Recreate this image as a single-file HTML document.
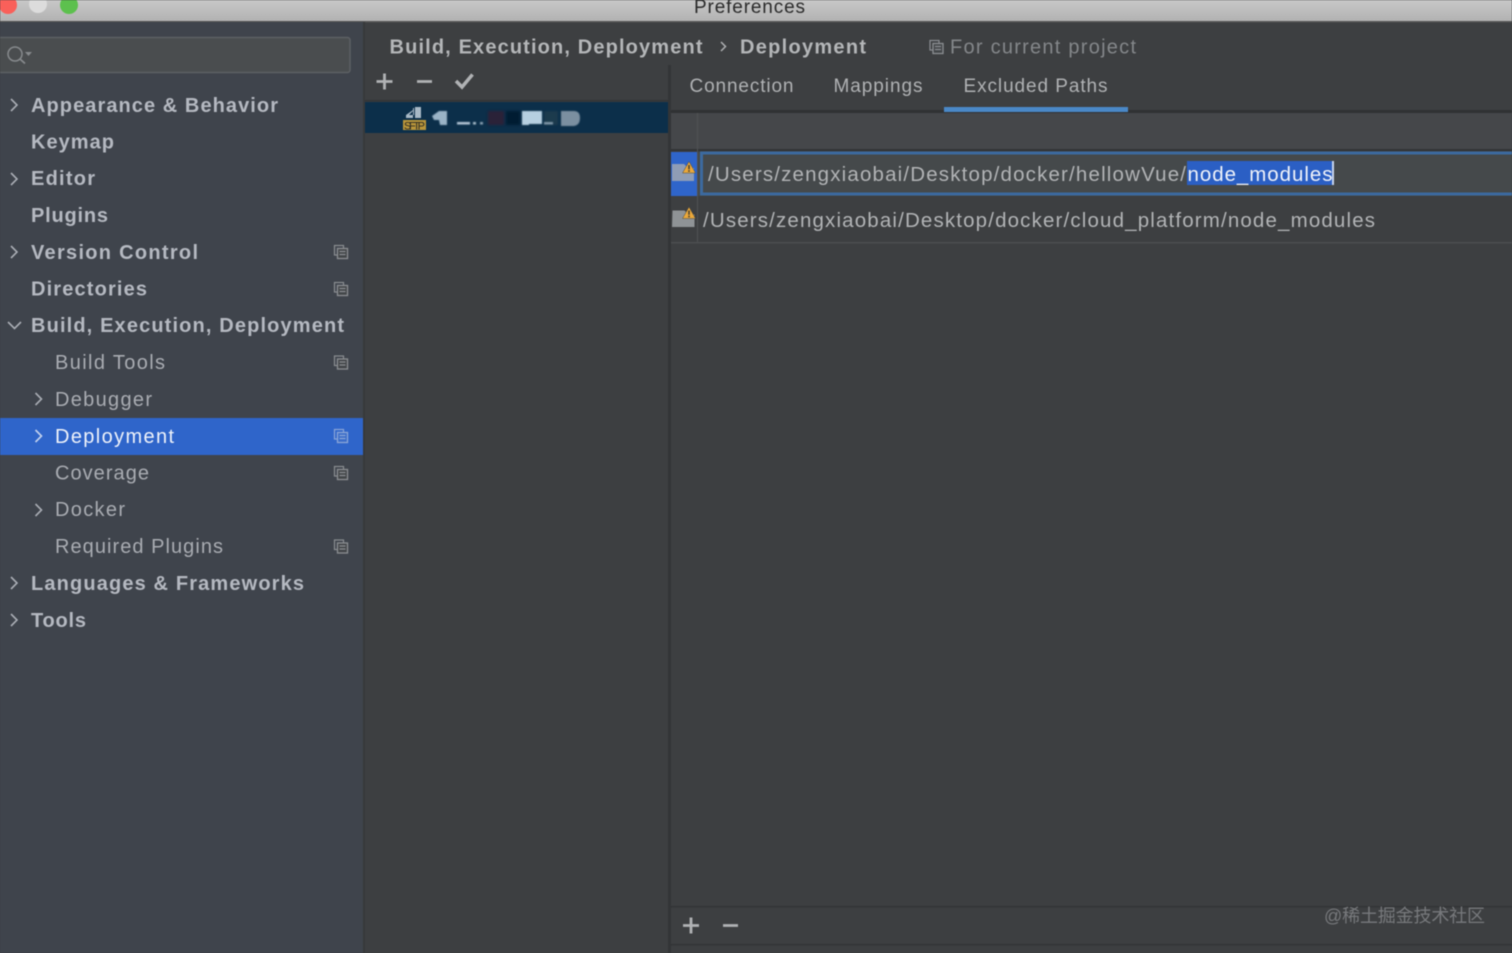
<!DOCTYPE html>
<html><head><meta charset="utf-8"><style>
html,body{margin:0;padding:0;background:#3d3f41;width:1512px;height:953px;overflow:hidden}
svg{display:block;filter:blur(.45px)}
text{font-family:"Liberation Sans","Noto Sans CJK SC",sans-serif;font-size:20px;fill:#b3b6bb}
.b{font-weight:700;fill:#b5b9c1}
.r{fill:#a9acb2}
.m{font-size:19px;fill:#b0b2b4}
.p{font-size:20.500px;fill:#b2b4b6}
.ch{fill:none;stroke:#a9adb4;stroke-width:1.600}
</style></head><body>
<svg width="1512" height="953" viewBox="0 0 1512 953" xmlns="http://www.w3.org/2000/svg">
<defs>
<linearGradient id="t" x1="0" x2="0" y1="0" y2="1"><stop offset="0" stop-color="#c8c8c8"/><stop offset="1" stop-color="#b2b2b2"/></linearGradient>
<filter id="bl" x="-30%" y="-30%" width="160%" height="160%"><feGaussianBlur stdDeviation="1"/></filter>
<g id="cp"><rect x="-6.500" y="-6.500" width="9" height="9.500" fill="none" stroke="#8b8e92" stroke-width="1.200"/><rect x="-3.500" y="-3.500" width="10" height="10" fill="#434649" stroke="#8b8e92" stroke-width="1.300"/><path d="M-1.500-.5h6M-1.500 2.500h6" stroke="#8b8e92" stroke-width="1.200"/></g>
<g id="warn"><path d="M6 0l6.500 11.500h-13z" fill="#eba83a" stroke="#4a4a40" stroke-width=".5"/><rect x="5.200" y="3.500" width="1.600" height="4.300" fill="#4a4130"/><rect x="5.200" y="8.700" width="1.600" height="1.600" fill="#4a4130"/></g>
</defs>
<rect width="1512" height="953" fill="#3d3f41"/>
<!-- title bar -->
<rect width="1512" height="21" fill="url(#t)"/>
<rect y="21" width="1512" height="1.500" fill="#555"/>
<circle cx="8" cy="5" r="9" fill="#f9605a"/><circle cx="38" cy="4" r="9" fill="#dcdcdc"/><circle cx="69" cy="5" r="9" fill="#5dc04e"/>
<text x="694" y="13" textLength="111" style="fill:#2a2a2a;font-size:19px">Preferences</text>
<!-- sidebar -->
<rect y="22" width="363" height="931" fill="#3f444c"/>
<rect x="363" y="22" width="2" height="931" fill="#37393b"/>
<rect x="-2" y="37.500" width="352" height="35" rx="2.500" fill="#4a4d4f" stroke="#5c6064" stroke-width="1.500"/>
<circle cx="15" cy="54" r="7" fill="none" stroke="#878a8d" stroke-width="1.500"/><path d="M20 59l5 4.500" stroke="#878a8d" stroke-width="1.800"/><path d="M25 52h7l-3.500 4z" fill="#878a8d"/>
<rect y="418" width="363" height="37" fill="#2f65ca"/>
<path class="ch" d="M11 99l6 6-6 6M11 173l6 6-6 6M11 246l6 6-6 6M11 577l6 6-6 6M11 614l6 6-6 6M8 322l6.500 6.500 6.500-6.500M35.500 393l6 6-6 6M35.500 504l6 6-6 6"/>
<path d="M35.500 430l6 6-6 6" fill="none" stroke="#c5d3ee" stroke-width="1.600"/>
<text class="b" x="31" y="112" textLength="247">Appearance &amp; Behavior</text>
<text class="b" x="31" y="148.500" textLength="83">Keymap</text>
<text class="b" x="31" y="185" textLength="64">Editor</text>
<text class="b" x="31" y="222" textLength="77">Plugins</text>
<text class="b" x="31" y="259" textLength="167">Version Control</text>
<text class="b" x="31" y="295.500" textLength="116">Directories</text>
<text class="b" x="31" y="332" textLength="313">Build, Execution, Deployment</text>
<text class="r" x="55" y="369" textLength="110">Build Tools</text>
<text class="r" x="55" y="406" textLength="97">Debugger</text>
<text x="55" y="443" textLength="119" style="fill:#eef2fa">Deployment</text>
<text class="r" x="55" y="479.500" textLength="94">Coverage</text>
<text class="r" x="55" y="516" textLength="70">Docker</text>
<text class="r" x="55" y="553" textLength="168">Required Plugins</text>
<text class="b" x="31" y="590" textLength="273">Languages &amp; Frameworks</text>
<text class="b" x="31" y="627" textLength="55">Tools</text>
<use href="#cp" x="341" y="252"/><use href="#cp" x="341" y="289"/><use href="#cp" x="341" y="362.500"/><use href="#cp" x="341" y="473"/><use href="#cp" x="341" y="546.500"/>
<g transform="translate(341 436)"><rect x="-6.500" y="-6.500" width="9" height="9.500" fill="none" stroke="#8ba6d8" stroke-width="1.200"/><rect x="-3.500" y="-3.500" width="10" height="10" fill="#3a6cc9" stroke="#8ba6d8" stroke-width="1.300"/><path d="M-1.500-.5h6M-1.500 2.500h6" stroke="#8ba6d8" stroke-width="1.200"/></g>
<!-- breadcrumb -->
<text class="b" x="389.500" y="53.500" textLength="313" style="fill:#b4b6b8">Build, Execution, Deployment</text>
<path d="M721 42l4.500 4.500-4.500 4.500" fill="none" stroke="#aeb0b2" stroke-width="1.500"/>
<text class="b" x="740" y="53.500" textLength="126" style="fill:#b4b6b8">Deployment</text>
<use href="#cp" x="936.500" y="47"/>
<text x="950" y="53.500" textLength="186" style="fill:#84878a">For current project</text>
<!-- list toolbar -->
<path d="M376.500 81.500h16M384.500 73.500v16M417 81.500h15" stroke="#b0b2b4" stroke-width="2.800" fill="none"/>
<path d="M456 81l6 6 10.500-12.500" stroke="#b0b2b4" stroke-width="3.500" fill="none"/>
<rect x="365" y="100" width="303" height="1.500" fill="#323436"/>
<!-- selected server -->
<rect x="365" y="102" width="303" height="31" fill="#0c2f4a"/>
<path d="M406 118v-3l7-5v-2h1v7h-1v-4l-4 4h4v3zM415 107h6v11h-6z" fill="#a8b9c6"/>
<rect x="403" y="120" width="23" height="10" fill="#b8953a"/>
<text x="404" y="129.500" textLength="21" style="font-size:11px;fill:#2d2c24">SFTP</text>
<g filter="url(#bl)" transform="translate(0 0)">
<rect x="488" y="111" width="16" height="14" fill="#2a2338"/>
<rect x="506" y="111" width="14" height="14" fill="#061a30"/>
<rect x="544" y="111" width="14" height="14" fill="#1f3a4e"/>
</g>
<g style="filter:blur(.5px)">
<path d="M432 116l7-5h8v14h-7l-1-5h-5z" fill="#9ab3c6"/>
<rect x="457" y="122" width="13" height="2.500" fill="#b4c6d6"/><rect x="473" y="122" width="3" height="2.500" fill="#a8bccb"/><rect x="480" y="122" width="3" height="2.500" fill="#8aa0b2"/>
<path d="M522 111h20v13h-13v1h-7z" fill="#b6cfe0"/>
<rect x="544" y="122" width="9" height="2.500" fill="#7e95a6"/>
<path d="M561 111h13q6 0 6 7t-6 8h-13z" fill="#7b8fa0"/>
</g>
<!-- vertical divider -->
<rect x="668" y="65" width="3" height="888" fill="#333537"/>
<!-- tabs -->
<text class="m" x="689.500" y="92" textLength="104">Connection</text>
<text class="m" x="833.500" y="92" textLength="89">Mappings</text>
<text class="m" x="963.500" y="92" textLength="144">Excluded Paths</text>
<rect x="671" y="110" width="841" height="3" fill="#303234"/>
<rect x="944" y="107" width="184" height="5" fill="#4a88c7"/>
<!-- table -->
<rect x="671" y="113" width="841" height="37" fill="#45474a"/>
<rect x="671" y="149" width="841" height="2" fill="#323436"/>
<rect x="697" y="113" width="1" height="130" fill="#505254"/>
<rect x="671" y="152" width="26" height="44" fill="#2f65ca"/>
<rect x="698" y="152" width="814" height="44" fill="#45494b"/>
<path d="M1512 153H701.500v41H1512" fill="none" stroke="#3c6a9f" stroke-width="3"/>
<path d="M672 164h12l4 4h6v13h-22z" fill="#8f9db5"/>
<use href="#warn" x="683" y="161.500"/>
<path d="M672.500 210.500h12l4 4h6v12.500h-22.500z" fill="#8f9396"/>
<use href="#warn" x="683" y="207"/>
<rect x="1187" y="161" width="146" height="24" fill="#2b5fc4"/>
<rect x="1332" y="161" width="2" height="24" fill="#c7d4ee"/>
<text class="p" x="708" y="181" textLength="478">/Users/zengxiaobai/Desktop/docker/hellowVue/</text>
<text class="p" x="1187.500" y="181" textLength="145" style="fill:#f0f3fa">node_modules</text>
<text class="p" x="703" y="227" textLength="672">/Users/zengxiaobai/Desktop/docker/cloud_platform/node_modules</text>
<rect x="671" y="242" width="841" height="1.500" fill="#4c4e50"/>
<!-- bottom toolbar -->
<rect x="671" y="906" width="841" height="1.500" fill="#323436"/>
<path d="M683 925.500h16M691 917.500v16M723 925.500h15" stroke="#b0b2b4" stroke-width="2.800" fill="none"/>
<rect x="671" y="944" width="841" height="1.500" fill="#323436"/>
<text x="1324" y="922" textLength="161" style="font-size:18px;fill:#77797c">@稀土掘金技术社区</text>
</svg>
</body></html>
